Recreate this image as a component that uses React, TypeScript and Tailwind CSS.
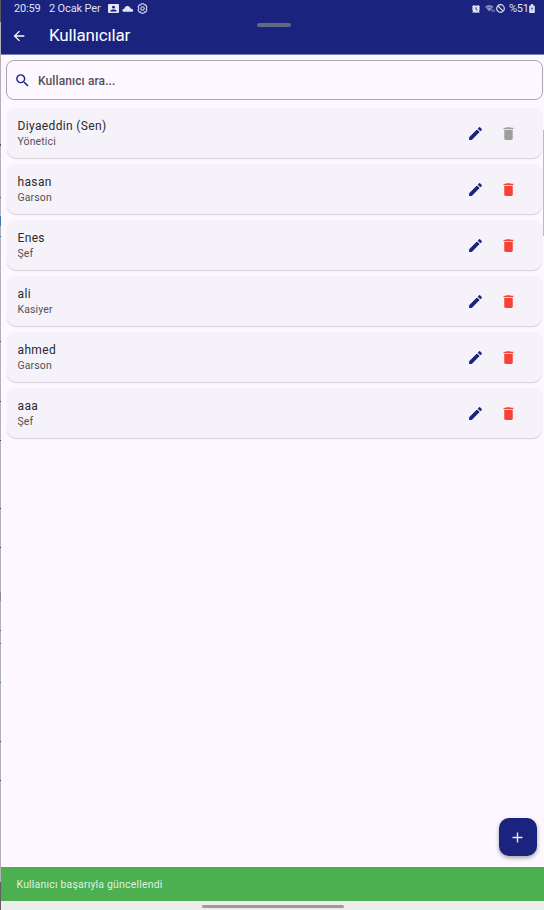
import { MdAdd, MdArrowBack, MdDelete, MdEdit, MdSearch } from 'react-icons/md';

type User = { name: string; role: string; self?: boolean };

const users: User[] = [
  { name: 'Diyaeddin (Sen)', role: 'Yönetici', self: true },
  { name: 'hasan', role: 'Garson' },
  { name: 'Enes', role: 'Şef' },
  { name: 'ali', role: 'Kasiyer' },
  { name: 'ahmed', role: 'Garson' },
  { name: 'aaa', role: 'Şef' },
];

// Marks visible along the left window edge.
const edgeMarks = [
  { y: 144, h: 2, color: '#555555' },
  { y: 197, h: 1, color: '#2878b8' },
  { y: 216, h: 10, color: '#3478b4' },
  { y: 236, h: 1, color: '#2878b8' },
  { y: 341, h: 1, color: '#444444' },
  { y: 401, h: 1, color: '#444444' },
  { y: 440, h: 1, color: '#444444' },
  { y: 508, h: 1, color: '#444444' },
  { y: 547, h: 1, color: '#444444' },
  { y: 592, h: 9, color: '#8c8c8c' },
  { y: 630, h: 1, color: '#666666' },
  { y: 643, h: 1, color: '#3a6a98' },
  { y: 682, h: 1, color: '#2878b8' },
  { y: 741, h: 1, color: '#444444' },
  { y: 780, h: 1, color: '#444444' },
  { y: 882, h: 28, color: '#666066' },
];

function PictureBadge() {
  return (
    <svg width="11" height="9" viewBox="0 0 11 9">
      <rect width="11" height="9" rx="1" fill="#e3e6f3" />
      <circle cx="5.5" cy="3.2" r="1.4" fill="#1a237e" />
      <path d="M2.2 7.4C2.7 4.9 8.3 4.9 8.8 7.4Z" fill="#1a237e" />
    </svg>
  );
}

function CloudGlyph() {
  return (
    <svg width="12" height="7" viewBox="0 0 12 7" fill="#e3e6f3">
      <path d="M1.4 6.8A1.5 1.5 0 0 1 1.5 3.9C2.1 3.9 2.3 3.8 2.6 3.1A3.1 3.1 0 0 1 8.3 2.7C8.6 3.5 9 3.7 9.8 4A1.5 1.5 0 0 1 10.4 6.8Z" />
    </svg>
  );
}

function HexSettings() {
  return (
    <svg width="11" height="11" viewBox="0 0 11 11" fill="none" stroke="#d5d9ec">
      <path
        d="M4.3.8h2.4l.6 1.2 1.4-.1 1.2 2-.8 1.6.8 1.6-1.2 2-1.4-.1-.6 1.2H4.3L3.7 9l-1.4.1-1.2-2 .8-1.6-.8-1.6 1.2-2 1.4.1Z"
        strokeWidth="1.1"
      />
      <circle cx="5.5" cy="5.5" r="1.7" strokeWidth="1.1" />
    </svg>
  );
}

function AlarmGlyph() {
  return (
    <svg width="8" height="8" viewBox="0 0 8 8">
      <path d="M0 1.6 1.8 0l.9.7a3.8 3.8 0 0 1 2.6 0L6.2 0 8 1.6l-.7 1a3.7 3.7 0 0 1-.3 3.6L7.7 7.4 7 8l-1-.8a3.6 3.6 0 0 1-4 0L1 8l-.7-.6L1 6.2a3.7 3.7 0 0 1-.3-3.6Z" fill="#dfe2f0" />
      <path d="M4 2.2v2.1l1.3.8" fill="none" stroke="#1a237e" strokeWidth="0.9" />
    </svg>
  );
}

function WifiGlyph() {
  return (
    <svg width="10" height="9" viewBox="0 0 10 9">
      <path d="M0 2.7Q4.2-.9 8.4 2.7L4.2 7.6Z" fill="#8d92be" />
      <path d="M1.4 4.2Q4.2 1.9 7 4.2" fill="none" stroke="#39418e" strokeWidth="0.7" />
      <path d="M7 5.2V8M9 5.2V8" stroke="#8d92be" strokeWidth="1" />
    </svg>
  );
}

function BlockGlyph() {
  return (
    <svg width="9" height="9" viewBox="0 0 9 9" fill="none" stroke="#dfe2f0" strokeWidth="1.2">
      <circle cx="4.5" cy="4.5" r="3.8" />
      <path d="m1.9 1.9 5.2 5.2" />
    </svg>
  );
}

function BatteryGlyph() {
  return (
    <svg width="6" height="9" viewBox="0 0 6 9" fill="#dfe2f0">
      <path d="M2 0h2v1.4h1.1a.7.7 0 0 1 .7.7v6.1a.7.7 0 0 1-.7.7H.9a.7.7 0 0 1-.7-.7V2.1a.7.7 0 0 1 .7-.7H2Z" />
      <path d="M3.4 2.3 1.5 5h1.2l-.4 1.9L4.5 4.3H3.2Z" fill="#1a237e" opacity="0.65" />
    </svg>
  );
}

function StatusBar() {
  return (
    <div className="flex h-[17px] items-center pl-[13px] pr-[9px] text-[11px] leading-none text-[#dfe2f0]">
      <span className="w-[35px] whitespace-nowrap tracking-[-0.15px]">20:59</span>
      <span className="w-[59px] whitespace-nowrap tracking-[-0.15px]">2 Ocak Per</span>
      <div className="flex items-center gap-[3px]">
        <PictureBadge />
        <CloudGlyph />
        <HexSettings />
      </div>
      <div className="ml-auto flex items-center">
        <AlarmGlyph />
        <div className="ml-[5px] mr-[1px]">
          <WifiGlyph />
        </div>
        <BlockGlyph />
        <span className="ml-[4px] w-[20px] whitespace-nowrap tracking-[-0.3px]">%51</span>
        <BatteryGlyph />
      </div>
    </div>
  );
}

function UserCard({ user }: { user: User }) {
  return (
    <div className="flex h-[50px] items-center rounded-[9px] bg-[#f5f3f9] pl-[11px] shadow-[0_1px_1px_rgba(0,0,0,0.16),0_0_1px_rgba(0,0,0,0.04)]">
      <div className="flex flex-1 flex-col pt-[2px]">
        <span className="text-[12px] leading-[16px] tracking-[0.35px] text-[#2b292e]">{user.name}</span>
        <span className="text-[10.5px] leading-[16px] tracking-[0.12px] text-[#535058]">{user.role}</span>
      </div>
      <div className="flex items-center gap-[16px] pr-[25px] pt-[1px]">
        <MdEdit size={17} className="text-[#1a237e]" />
        <MdDelete size={17} className={user.self ? 'text-[#9e9e9e]' : 'text-[#f44336]'} />
      </div>
    </div>
  );
}

export default function App() {
  return (
    <div className="relative flex h-[910px] w-[544px] overflow-hidden bg-[#b3b1b3] font-[Roboto,sans-serif]">
      <div className="absolute left-0 top-0 h-[22px] w-px bg-[#5a5a5a]" />
      {edgeMarks.map((m) => (
        <div key={m.y} className="absolute left-0 w-px" style={{ top: m.y, height: m.h, backgroundColor: m.color }} />
      ))}
      <div className="relative ml-px flex flex-1 flex-col bg-[#fdf7ff]">
        <header className="relative h-[55px] border-b border-[#7c82b8] bg-[#1a237e]">
          <StatusBar />
          <div className="flex h-[37px] items-center pl-[10px] text-white">
            <MdArrowBack size={16} />
            <h1 className="ml-[22px] text-[17px] font-normal leading-none tracking-[-0.18px]">Kullanıcılar</h1>
          </div>
          <div className="absolute left-[256px] top-[23px] h-[4px] w-[34px] rounded-full bg-[#626983]" />
        </header>

        <main className="flex flex-1 flex-col pl-[4.5px] pr-px pt-[5px]">
          <div className="flex h-[40px] items-center rounded-[8px] border border-[#aaa7ad] pl-[7.5px]">
            <MdSearch size={17} className="text-[#1a237e]" />
            <span className="ml-[7px] pt-px text-[12px] font-medium tracking-[0.1px] text-[#535058]">Kullanıcı ara...</span>
          </div>
          <div className="ml-[1px] mr-[1px] mt-[8px] flex flex-col gap-[6px]">
            {users.map((u) => (
              <UserCard key={u.name} user={u} />
            ))}
          </div>
        </main>

        <button className="absolute bottom-[54px] right-[7px] flex h-[38px] w-[38px] items-center justify-center rounded-[10px] bg-[#1a237e] pr-[2px] text-[#e8eaf6] shadow-[0_2px_4px_rgba(0,0,0,0.35)]">
          <MdAdd size={17} />
        </button>

        <div className="absolute right-0 top-[130px] h-[106px] w-px bg-[#bcb8be]" />

        <div className="flex h-[34px] items-center bg-[#4caf50] pl-[15.5px] pt-px text-[10.5px] tracking-[0.18px] text-[#dff2e0]">
          Kullanıcı başarıyla güncellendi
        </div>
        <div className="flex h-[9px] justify-center bg-[#eeedee] pl-px pt-[4px]">
          <div className="h-[3px] w-[142px] rounded-full bg-[#9d9b9d]" />
        </div>
      </div>
    </div>
  );
}
